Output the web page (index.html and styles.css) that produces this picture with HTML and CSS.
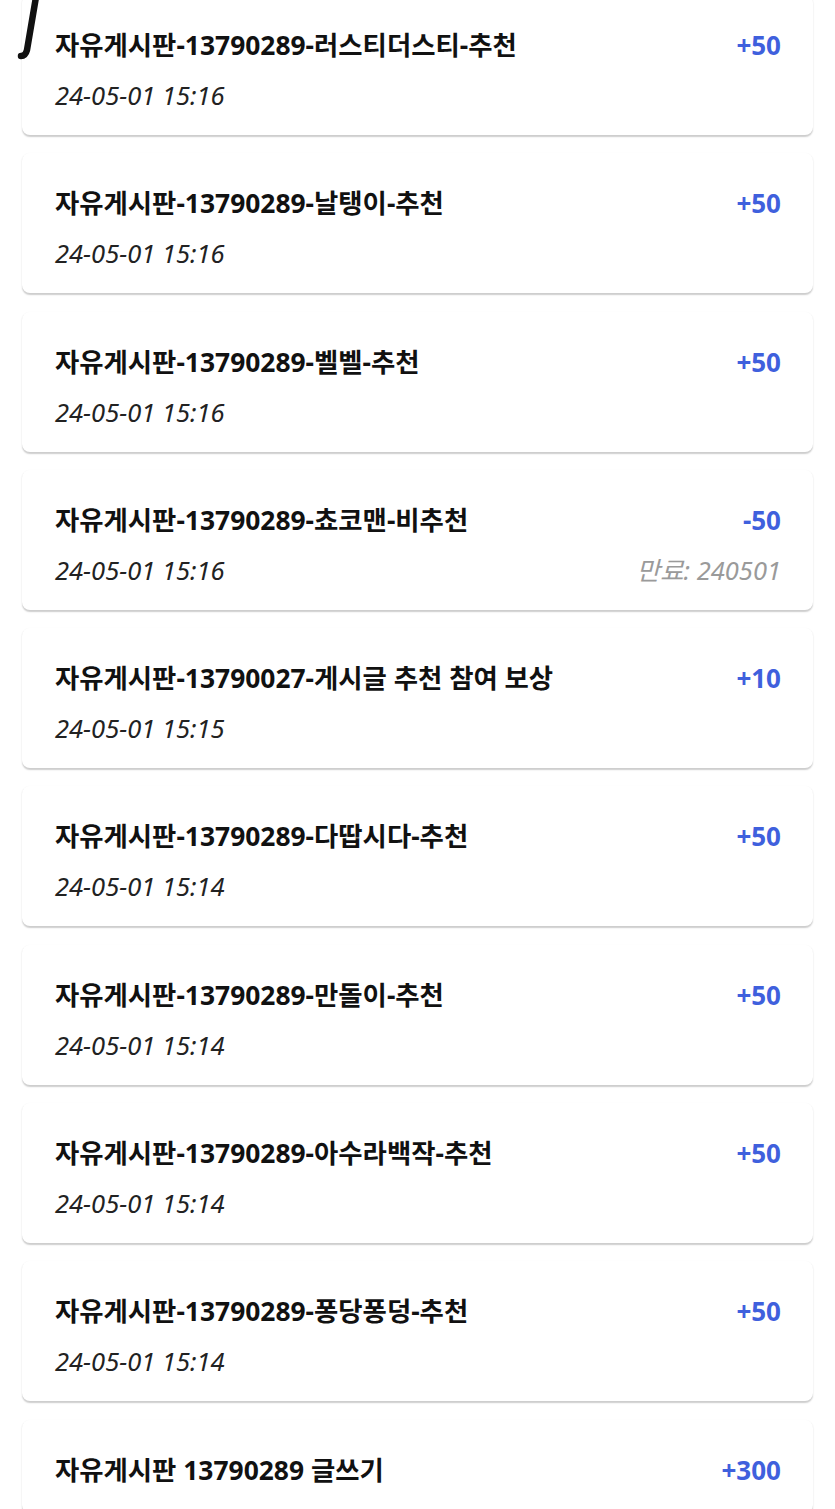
FILE: index.html
```html
<!DOCTYPE html>
<html lang="ko">
<head>
<meta charset="utf-8">
<title>포인트 내역</title>
<link rel="stylesheet" href="styles.css">
</head>
<body>
<svg class="penMark" width="50" height="70" viewBox="0 0 50 70">
  <path d="M36 -3 C33 15 30 33 27 50 C26 54 24 56 21 56" stroke="#111" stroke-width="6.5" fill="none" stroke-linecap="round" stroke-linejoin="round"/>
</svg>
<div class="list">
  <div class="item">
    <div class="row"><span class="title">자유게시판-13790289-러스티더스티-추천</span><span class="amount">+50</span></div>
    <div class="row"><span class="date">24-05-01 15:16</span></div>
  </div>
  <div class="item">
    <div class="row"><span class="title">자유게시판-13790289-날탱이-추천</span><span class="amount">+50</span></div>
    <div class="row"><span class="date">24-05-01 15:16</span></div>
  </div>
  <div class="item">
    <div class="row"><span class="title">자유게시판-13790289-벨벨-추천</span><span class="amount">+50</span></div>
    <div class="row"><span class="date">24-05-01 15:16</span></div>
  </div>
  <div class="item">
    <div class="row"><span class="title">자유게시판-13790289-쵸코맨-비추천</span><span class="amount">-50</span></div>
    <div class="row"><span class="date">24-05-01 15:16</span><span class="expire">만료: 240501</span></div>
  </div>
  <div class="item">
    <div class="row"><span class="title">자유게시판-13790027-게시글 추천 참여 보상</span><span class="amount">+10</span></div>
    <div class="row"><span class="date">24-05-01 15:15</span></div>
  </div>
  <div class="item">
    <div class="row"><span class="title">자유게시판-13790289-다땁시다-추천</span><span class="amount">+50</span></div>
    <div class="row"><span class="date">24-05-01 15:14</span></div>
  </div>
  <div class="item">
    <div class="row"><span class="title">자유게시판-13790289-만돌이-추천</span><span class="amount">+50</span></div>
    <div class="row"><span class="date">24-05-01 15:14</span></div>
  </div>
  <div class="item">
    <div class="row"><span class="title">자유게시판-13790289-아수라백작-추천</span><span class="amount">+50</span></div>
    <div class="row"><span class="date">24-05-01 15:14</span></div>
  </div>
  <div class="item">
    <div class="row"><span class="title">자유게시판-13790289-퐁당퐁덩-추천</span><span class="amount">+50</span></div>
    <div class="row"><span class="date">24-05-01 15:14</span></div>
  </div>
  <div class="item">
    <div class="row"><span class="title">자유게시판 13790289 글쓰기</span><span class="amount">+300</span></div>
  </div>
</div>
</body>
</html>
```
FILE: styles.css
```css
body {
    margin: 0;
    background-color: #ffffff;
    font-family: "Noto Sans", "Noto Sans CJK KR", sans-serif;
    overflow: hidden;
}

.penMark {
    position: absolute;
    left: 0;
    top: 0;
}

.list {
    margin-top: -5px;
    padding: 0 22px;
    display: flex;
    flex-direction: column;
    gap: 18.3px;
}

.item {
    background-color: #ffffff;
    border-radius: 8px;
    box-shadow: 0 1.5px 1.5px rgba(0, 0, 0, 0.2);
    padding: 32px 32px 25px 33px;
    display: flex;
    flex-direction: column;
    gap: 17px;
}

.row {
    display: flex;
    justify-content: space-between;
    align-items: center;
}

.title {
    font-size: 26.4px;
    font-weight: bold;
    color: #111111;
    line-height: 36px;
}

.amount {
    font-size: 26px;
    font-weight: bold;
    color: #3f60dd;
    line-height: 36px;
}

.date {
    font-size: 25.5px;
    font-style: italic;
    color: #222222;
    line-height: 30px;
}

.expire {
    font-size: 25.5px;
    font-style: italic;
    color: #9a9a9a;
    line-height: 30px;
}
```
